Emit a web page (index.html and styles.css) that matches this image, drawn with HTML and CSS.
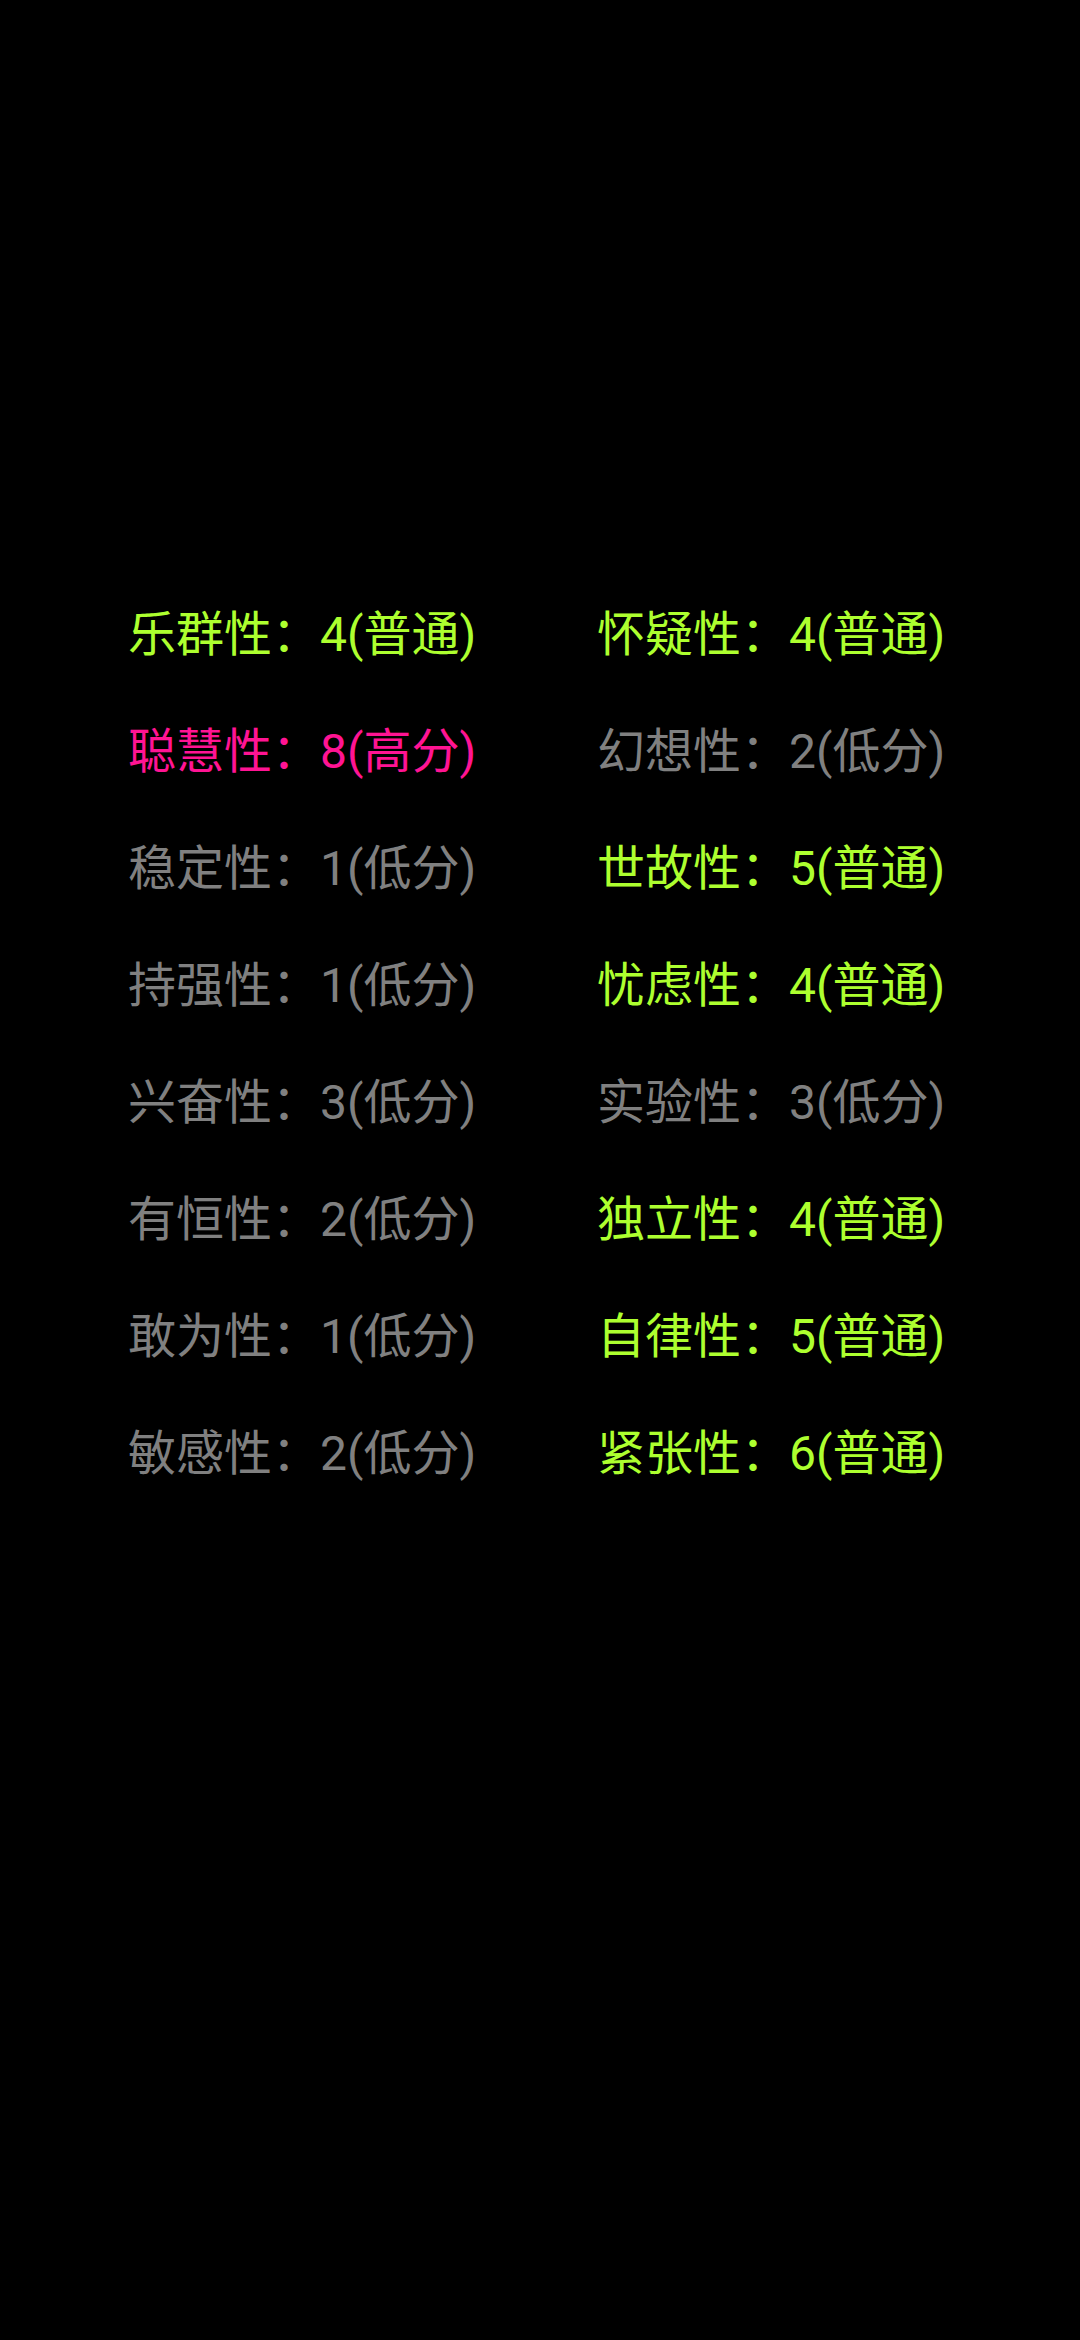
FILE: index.html
```html
<!DOCTYPE html>
<html lang="zh-CN">
<head>
<meta charset="utf-8">
<link rel="stylesheet" href="styles.css">
</head>
<body>
<main class="page">
  <div class="grid">
    <div class="item mid">乐群性：4(普通)</div>
    <div class="item mid">怀疑性：4(普通)</div>
    <div class="item high">聪慧性：8(高分)</div>
    <div class="item low">幻想性：2(低分)</div>
    <div class="item low">稳定性：1(低分)</div>
    <div class="item mid">世故性：5(普通)</div>
    <div class="item low">持强性：1(低分)</div>
    <div class="item mid">忧虑性：4(普通)</div>
    <div class="item low">兴奋性：3(低分)</div>
    <div class="item low">实验性：3(低分)</div>
    <div class="item low">有恒性：2(低分)</div>
    <div class="item mid">独立性：4(普通)</div>
    <div class="item low">敢为性：1(低分)</div>
    <div class="item mid">自律性：5(普通)</div>
    <div class="item low">敏感性：2(低分)</div>
    <div class="item mid">紧张性：6(普通)</div>
  </div>
</main>
</body>
</html>
```

FILE: styles.css
```css
html, body {
  margin: 0;
  padding: 0;
  background: #000;
}
.page {
  width: 1080px;
  height: 2340px;
  background: #000;
  padding-top: 576px;
  box-sizing: border-box;
}
.grid {
  display: grid;
  grid-template-columns: 469px 1fr;
  grid-auto-rows: 117px;
  padding-left: 128px;
}
.item {
  font-family: Roboto, "Noto Sans CJK SC", sans-serif;
  font-size: 48px;
  line-height: 117px;
  white-space: nowrap;
  text-spacing-trim: space-all;
}
.mid { color: #adff2f; }
.high { color: #ff1493; }
.low { color: #808080; }
```
